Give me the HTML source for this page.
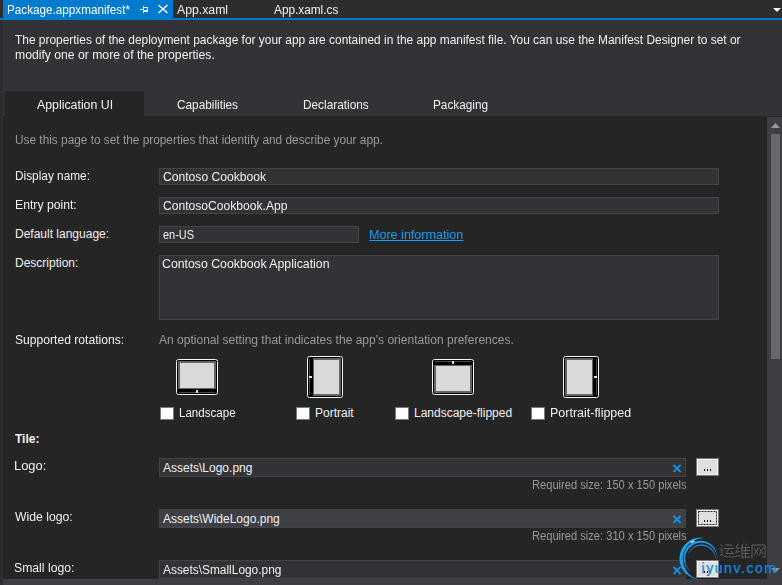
<!DOCTYPE html>
<html><head><meta charset="utf-8">
<style>
html,body{margin:0;padding:0;}
body{width:782px;height:585px;overflow:hidden;position:relative;background:#2D2D30;font-family:"Liberation Sans",sans-serif;font-size:12px;}
.a{position:absolute;}
.t{position:absolute;white-space:pre;line-height:15px;color:#F1F1F1;transform-origin:0 0;}
.g{color:#999999;}
.box{position:absolute;background:#333337;border:1px solid #434346;box-sizing:border-box;}
.cb{position:absolute;width:14px;height:13px;background:#fff;border:1px solid #7a7a7a;box-sizing:border-box;}
</style></head>
<body>
<!-- tab well -->
<div class="a" style="left:3px;top:0;width:170px;height:18px;background:#007ACC"></div>
<div class="a" style="left:0;top:18px;width:782px;height:2px;background:#007ACC"></div>
<div id="x1" class="t" style="left:7px;top:3px;color:#fff;transform:scaleX(0.9758)">Package.appxmanifest*</div>
<div id="x2" class="t" style="left:177px;top:3px;transform:scaleX(1.0208)">App.xaml</div>
<div id="x3" class="t" style="left:274px;top:3px;transform:scaleX(0.9844)">App.xaml.cs</div>

<!-- pin & close -->
<svg class="a" style="left:0;top:0" width="782" height="20" shape-rendering="crispEdges">
<rect x="140" y="9" width="3" height="1" fill="#fff"/>
<rect x="143" y="6" width="1" height="7" fill="#fff"/>
<rect x="144" y="7" width="4" height="1" fill="#fff"/>
<rect x="144" y="10" width="4" height="2" fill="#fff"/>
<rect x="147" y="7" width="1" height="5" fill="#fff"/>
<path d="M773 8 L781 8 L777 12 Z" fill="#F1F1F1" shape-rendering="geometricPrecision"/>
</svg>
<svg class="a" style="left:157px;top:4px" width="12" height="10"><path d="M1.5 1 L10.5 9 M10.5 1 L1.5 9" stroke="#fff" stroke-width="1.4"/></svg>
<!-- header -->
<div class="a" style="left:3px;top:20px;width:779px;height:96px;background:#333337"></div>
<div id="x4" class="t" style="left:15px;top:33px;transform:scaleX(0.9932)">The properties of the deployment package for your app are contained in the app manifest file. You can use the Manifest Designer to set or</div>
<div id="x5" class="t" style="left:15px;top:48px;transform:scaleX(1.0155)">modify one or more of the properties.</div>
<!-- tabs -->
<div class="a" style="left:5px;top:91px;width:139px;height:25px;background:#252526"></div>
<div id="x6" class="t" style="left:37px;top:98px;transform:scaleX(1.0278)">Application UI</div>
<div id="x7" class="t" style="left:177px;top:98px;transform:scaleX(0.9836)">Capabilities</div>
<div id="x8" class="t" style="left:303px;top:98px;transform:scaleX(0.9850)">Declarations</div>
<div id="x9" class="t" style="left:433px;top:98px;transform:scaleX(0.9819)">Packaging</div>
<!-- content -->
<div class="a" style="left:3px;top:116px;width:764px;height:463px;background:#252526"></div>
<div class="a" style="left:767px;top:116px;width:15px;height:1px;background:#2A2A2D"></div><div class="a" style="left:767px;top:117px;width:15px;height:468px;background:#3E3E42"></div>
<div class="a" style="left:3px;top:579px;width:764px;height:6px;background:#3E3E42"></div>
<svg class="a" style="left:767px;top:116px" width="15" height="469"><path d="M4 12 L13 12 L8.5 7 Z" fill="#999"/><path d="M4 452 L13 452 L8.5 456.5 Z" fill="#999"/></svg>
<div class="a" style="left:771px;top:134px;width:9px;height:225px;background:#686868"></div>

<div id="x10" class="t g" style="left:15px;top:133px;transform:scaleX(0.9865)">Use this page to set the properties that identify and describe your app.</div>

<div id="x11" class="t" style="left:15px;top:169px;transform:scaleX(0.9863)">Display name:</div>
<div class="box" style="left:159px;top:168px;width:560px;height:17px"></div>
<div id="x12" class="t" style="left:163px;top:170px;transform:scaleX(1.0099)">Contoso Cookbook</div>

<div id="x13" class="t" style="left:15px;top:198px;transform:scaleX(1.0172)">Entry point:</div>
<div class="box" style="left:159px;top:197px;width:560px;height:17px"></div>
<div id="x14" class="t" style="left:163px;top:199px;transform:scaleX(1.0082)">ContosoCookbook.App</div>

<div id="x15" class="t" style="left:15px;top:227px">Default language:</div>
<div class="box" style="left:159px;top:226px;width:200px;height:17px"></div>
<div id="x16" class="t" style="left:163px;top:228px;transform:scaleX(0.9091)">en-US</div>
<div id="x17" class="t" style="left:369px;top:228px;color:#12A0FA;text-decoration:underline;transform:scaleX(1.0462)">More information</div>

<div id="x18" class="t" style="left:15px;top:256px">Description:</div>
<div class="box" style="left:159px;top:255px;width:560px;height:65px"></div>
<div id="x19" class="t" style="left:162px;top:257px;transform:scaleX(1.0247)">Contoso Cookbook Application</div>

<div id="x20" class="t" style="left:15px;top:333px;transform:scaleX(1.0095)">Supported rotations:</div>
<div id="x21" class="t g" style="left:159px;top:333px;transform:scaleX(1.0028)">An optional setting that indicates the app's orientation preferences.</div>


<!-- rotation icons -->
<svg class="a" style="left:176px;top:359px" width="42" height="36"><g shape-rendering="crispEdges">
<rect x="0.5" y="0.5" width="41" height="35" rx="2" ry="2" fill="#000" stroke="#F4F4F4" stroke-width="1" shape-rendering="geometricPrecision"/>
<rect x="2" y="2" width="38" height="28" fill="#646464"/>
<rect x="4" y="4" width="34" height="25" fill="#D9D9D9"/>
<rect x="3" y="33" width="36" height="1" fill="#4a4a4a"/>
<rect x="20" y="31" width="2" height="3" fill="#E0E0E0"/>
</g></svg>
<svg class="a" style="left:307px;top:356px" width="36" height="42"><g transform="translate(36,0) rotate(90)"><g shape-rendering="crispEdges">
<rect x="0.5" y="0.5" width="41" height="35" rx="2" ry="2" fill="#000" stroke="#F4F4F4" stroke-width="1" shape-rendering="geometricPrecision"/>
<rect x="2" y="2" width="38" height="28" fill="#646464"/>
<rect x="4" y="4" width="34" height="25" fill="#D9D9D9"/>
<rect x="3" y="33" width="36" height="1" fill="#4a4a4a"/>
<rect x="20" y="31" width="2" height="3" fill="#E0E0E0"/>
</g></g></svg>
<svg class="a" style="left:432px;top:359px" width="42" height="36"><g transform="translate(42,36) rotate(180)"><g shape-rendering="crispEdges">
<rect x="0.5" y="0.5" width="41" height="35" rx="2" ry="2" fill="#000" stroke="#F4F4F4" stroke-width="1" shape-rendering="geometricPrecision"/>
<rect x="2" y="2" width="38" height="28" fill="#646464"/>
<rect x="4" y="4" width="34" height="25" fill="#D9D9D9"/>
<rect x="3" y="33" width="36" height="1" fill="#4a4a4a"/>
<rect x="20" y="31" width="2" height="3" fill="#E0E0E0"/>
</g></g></svg>
<svg class="a" style="left:563px;top:356px" width="36" height="42"><g transform="translate(0,42) rotate(-90)"><g shape-rendering="crispEdges">
<rect x="0.5" y="0.5" width="41" height="35" rx="2" ry="2" fill="#000" stroke="#F4F4F4" stroke-width="1" shape-rendering="geometricPrecision"/>
<rect x="2" y="2" width="38" height="28" fill="#646464"/>
<rect x="4" y="4" width="34" height="25" fill="#D9D9D9"/>
<rect x="3" y="33" width="36" height="1" fill="#4a4a4a"/>
<rect x="20" y="31" width="2" height="3" fill="#E0E0E0"/>
</g></g></svg>
<div class="cb" style="left:160px;top:407px"></div>
<div id="x22" class="t" style="left:179px;top:406px;transform:scaleX(0.9643)">Landscape</div>
<div class="cb" style="left:296px;top:407px"></div>
<div id="x23" class="t" style="left:315px;top:406px;transform:scaleX(1.0000)">Portrait</div>
<div class="cb" style="left:395px;top:407px"></div>
<div id="x24" class="t" style="left:414px;top:406px;transform:scaleX(1.0000)">Landscape-flipped</div>
<div class="cb" style="left:531px;top:407px"></div>
<div id="x25" class="t" style="left:550px;top:406px;transform:scaleX(1.0405)">Portrait-flipped</div>

<div id="x26" class="t" style="left:15px;top:432px;font-weight:bold;transform:scaleX(1.0000)">Tile:</div>

<div id="x27" class="t" style="left:14px;top:459px;transform:scaleX(1.0740)">Logo:</div>
<div class="box" style="left:159px;top:458px;width:527px;height:19px"></div>
<div id="x28" class="t" style="left:163px;top:461px">Assets\Logo.png</div>
<div class="a" style="left:696px;top:458px;width:23px;height:18px;box-sizing:border-box;border:1px solid #7A7A7A;background:#DFDFDF;box-shadow:inset 0 0 0 1px #F2F2F2"></div>

<svg class="a" style="left:700px;top:468px" width="14" height="4" shape-rendering="crispEdges"><rect x="4" y="1" width="1" height="2" fill="#300"/><rect x="7" y="1" width="1" height="2" fill="#300"/><rect x="10" y="1" width="1" height="2" fill="#300"/></svg>
<svg class="a" style="left:672px;top:464px" width="10" height="9"><path d="M1.4 0.8 L8.6 8 M8.6 0.8 L1.4 8" stroke="#0A9CFA" stroke-width="1.75"/></svg>
<div id="x29" class="t g" style="left:532px;top:478px;transform:scaleX(0.9273)">Required size: 150 x 150 pixels</div>

<div id="x30" class="t" style="left:15px;top:510px;transform:scaleX(1.0182)">Wide logo:</div>
<div class="box" style="left:159px;top:509px;width:527px;height:19px;background:#3F3F46"></div>
<div id="x31" class="t" style="left:163px;top:512px">Assets\WideLogo.png</div>
<div class="a" style="left:696px;top:509px;width:23px;height:18px;box-sizing:border-box;border:1px solid #7A7A7A;background:#DFDFDF;box-shadow:inset 0 0 0 1px #F2F2F2"></div>
<svg class="a" style="left:698px;top:511px" width="19" height="14"><rect x="0.5" y="0.5" width="18" height="13" fill="none" stroke="#222" stroke-width="1" stroke-dasharray="2 1"/></svg>
<svg class="a" style="left:700px;top:519px" width="14" height="4" shape-rendering="crispEdges"><rect x="4" y="1" width="1" height="2" fill="#300"/><rect x="7" y="1" width="1" height="2" fill="#300"/><rect x="10" y="1" width="1" height="2" fill="#300"/></svg>
<svg class="a" style="left:672px;top:515px" width="10" height="9"><path d="M1.4 0.8 L8.6 8 M8.6 0.8 L1.4 8" stroke="#0A9CFA" stroke-width="1.75"/></svg>
<div id="x32" class="t g" style="left:532px;top:529px;transform:scaleX(0.9273)">Required size: 310 x 150 pixels</div>

<div id="x33" class="t" style="left:14px;top:561px;transform:scaleX(1.0176)">Small logo:</div>
<div class="box" style="left:159px;top:560px;width:527px;height:19px"></div>
<div id="x34" class="t" style="left:163px;top:563px;transform:scaleX(0.9915)">Assets\SmallLogo.png</div>
<div class="a" style="left:696px;top:560px;width:23px;height:18px;box-sizing:border-box;border:1px solid #7A7A7A;background:#DFDFDF;box-shadow:inset 0 0 0 1px #F2F2F2"></div>

<svg class="a" style="left:700px;top:570px" width="14" height="4" shape-rendering="crispEdges"><rect x="4" y="1" width="1" height="2" fill="#300"/><rect x="7" y="1" width="1" height="2" fill="#300"/><rect x="10" y="1" width="1" height="2" fill="#300"/></svg>
<svg class="a" style="left:672px;top:566px" width="10" height="9"><path d="M1.4 0.8 L8.6 8 M8.6 0.8 L1.4 8" stroke="#0A9CFA" stroke-width="1.75"/></svg>



<!-- watermark -->
<svg class="a" style="left:0;top:0" width="782" height="585">
<mask id="m1"><circle cx="700.5" cy="558.5" r="21" fill="#fff"/><circle cx="703.65" cy="559.06" r="21.00" fill="#000"/></mask>
<clipPath id="m1c"><path d="M700.50 558.50 L698.32 583.40 L695.00 582.89 L691.78 581.93 L688.72 580.55 L685.86 578.77 L683.28 576.62 L681.00 574.15 L679.08 571.39 L677.54 568.40 L676.42 565.23 L675.74 561.94 L675.50 558.59 L675.71 555.24 L676.38 551.94 L677.47 548.77 L678.99 545.76 L680.89 542.99 L683.15 540.50 L685.72 538.34 L688.56 536.54 L691.61 535.13 L694.82 534.15 L698.14 533.61 L701.50 533.52 L704.84 533.88 Z"/></clipPath>
<g clip-path="url(#m1c)"><rect x="678.5" y="536.5" width="44.0" height="44.0" fill="#1FA2EE" mask="url(#m1)"/></g>
<mask id="m2"><circle cx="700.5" cy="557.5" r="16.8" fill="#fff"/><circle cx="701.18" cy="558.95" r="16.15" fill="#000"/></mask>
<clipPath id="m2c"><path d="M700.50 557.50 L687.69 573.89 L685.10 571.49 L682.96 568.68 L681.32 565.54 L680.23 562.18 L679.73 558.68 L679.83 555.15 L680.53 551.68 L681.81 548.38 L683.62 545.35 L685.92 542.66 L688.64 540.41 L691.71 538.65 L695.03 537.43 L698.51 536.80 L702.04 536.76 L705.53 537.32 L708.88 538.46 L711.98 540.16 L714.75 542.35 L717.11 544.98 L718.99 547.98 L720.34 551.25 L721.11 554.70 L721.29 558.23 Z"/></clipPath>
<g clip-path="url(#m2c)"><rect x="682.7" y="539.7" width="35.6" height="35.6" fill="#1D9CE8" mask="url(#m2)"/></g>
<mask id="m3"><circle cx="701.5" cy="558.5" r="14" fill="#fff"/><circle cx="701.20" cy="560.17" r="14.30" fill="#000"/></mask>
<clipPath id="m3c"><path d="M701.50 558.50 L684.38 552.94 L685.16 550.94 L686.18 549.05 L687.41 547.29 L688.85 545.70 L690.46 544.28 L692.23 543.07 L694.13 542.08 L696.14 541.32 L698.22 540.80 L700.35 540.54 L702.49 540.53 L704.63 540.77 L706.71 541.27 L708.73 542.01 L710.64 542.99 L712.42 544.19 L714.04 545.59 L715.49 547.17 L716.74 548.92 L717.77 550.80 L718.57 552.79 L719.13 554.86 L719.44 556.98 L719.49 559.13 Z"/></clipPath>
<g clip-path="url(#m3c)"><rect x="686.5" y="543.5" width="30.0" height="30.0" fill="#1A90DC" mask="url(#m3)"/></g>
<path d="M690.8 542.6 L694.3 540.9" stroke="#E8F8FF" stroke-width="1.2"/>
<g stroke="#5E5E66" stroke-width="1" fill="none" stroke-linecap="square">
<path d="M721 545 L722.5 546.5 M720 549 L722 549 L722 554 L720 556 M722 555 C724 557 728 557 734 557 M726 545 L732 545 M724.5 548.5 L733.5 548.5 M729 548.5 L726 553.5 L733 553.5 M731.5 551.5 L733 554"/>
<path d="M738 544 L736 548 L739 548 L735.5 552.5 L739.5 551.5 M735.5 556.5 L739.5 555.5 M743 544 L741 548.5 M742 547 L742 558 M746 544 L747 545.5 M742.5 547.5 L749.5 547.5 M743 550.5 L749 550.5 M743 553.5 L749 553.5 M742 557 L750 557 M745.5 547.5 L745.5 557"/>
<path d="M752 558 L752 545 L765 545 L765 557 L763 557 M754 548 L758 554 M758 548 L754.5 555 M759 548 L763 554 M763 548 L759.5 555"/>
</g>
<text x="701.5" y="573" font-family="Liberation Sans" font-size="14" fill="#0E8AE6" stroke="#0E8AE6" stroke-width="0.25" textLength="74.5" lengthAdjust="spacing">iyunv.com</text>
</svg>
</body></html>
